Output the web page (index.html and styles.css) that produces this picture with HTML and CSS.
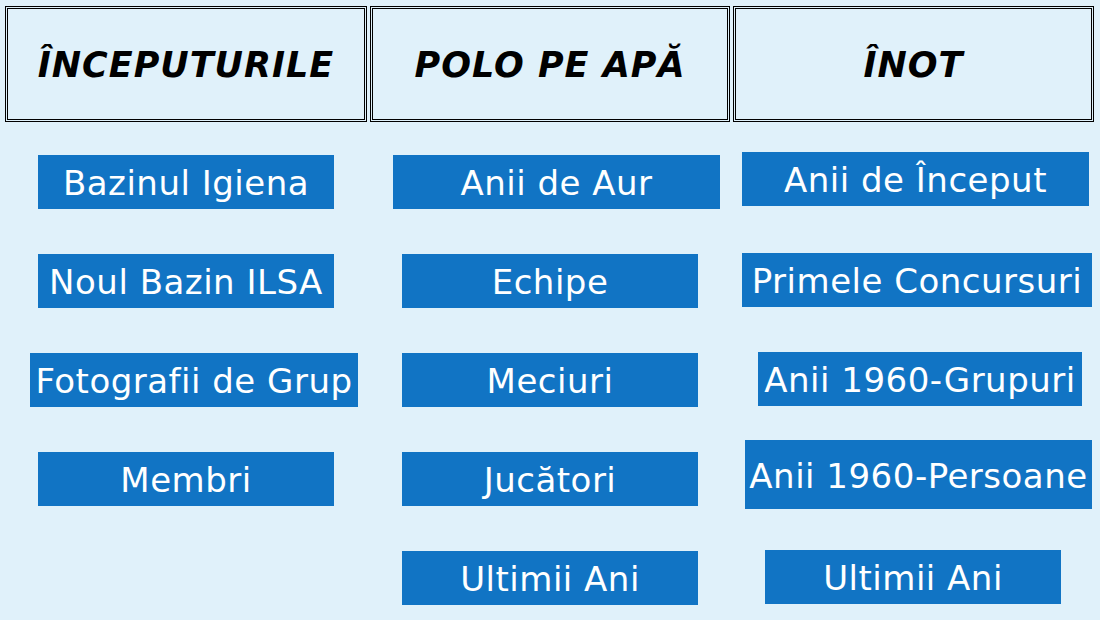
FILE: index.html
```html
<!DOCTYPE html>
<html lang="ro">
<head>
    <meta charset="UTF-8">
    <meta name="viewport" content="width=device-width, initial-scale=1.0">
    <title>Arhiva Clubului</title>
    <link rel="stylesheet" href="styles.css">
</head>
<body>
    <div class="archive">
        <div class="section">
            <h2 class="section-title">ÎNCEPUTURILE</h2>
            <div class="btn-list">
                <a class="btn" href="#">Bazinul Igiena</a>
                <a class="btn" href="#">Noul Bazin ILSA</a>
                <a class="btn btn-wide" href="#">Fotografii de Grup</a>
                <a class="btn" href="#">Membri</a>
            </div>
        </div>
        <div class="section">
            <h2 class="section-title">POLO PE APĂ</h2>
            <div class="btn-list">
                <a class="btn btn-gold" href="#">Anii de Aur</a>
                <a class="btn" href="#">Echipe</a>
                <a class="btn" href="#">Meciuri</a>
                <a class="btn" href="#">Jucători</a>
                <a class="btn" href="#">Ultimii Ani</a>
            </div>
        </div>
        <div class="section swim">
            <h2 class="section-title">ÎNOT</h2>
            <div class="btn-list">
                <a class="btn btn-start" href="#">Anii de Început</a>
                <a class="btn btn-contests" href="#">Primele Concursuri</a>
                <a class="btn btn-groups" href="#">Anii 1960-Grupuri</a>
                <a class="btn btn-people" href="#">Anii 1960-Persoane</a>
                <a class="btn btn-last" href="#">Ultimii Ani</a>
            </div>
        </div>
    </div>
</body>
</html>
```

FILE: styles.css
```css
body {
    margin: 0;
    background-color: #e0f1fa;
    font-family: "DejaVu Sans", Verdana, sans-serif;
    height: 620px;
    overflow: hidden;
}
.archive {
    display: grid;
    grid-template-columns: 362px 360px 361px;
    column-gap: 3px;
    padding: 6px 5px 0;
}
.section-title {
    margin: 0;
    height: 116px;
    box-sizing: border-box;
    padding-top: 2px;
    border: 3px double #000;
    display: flex;
    align-items: center;
    justify-content: center;
    font-size: 35px;
    font-style: italic;
    font-weight: bold;
    letter-spacing: 1px;
    color: #000;
}
.btn-list {
    display: flex;
    flex-direction: column;
    align-items: center;
    gap: 45px;
    padding-top: 33px;
}
.btn {
    width: 296px;
    height: 54px;
    box-sizing: border-box;
    padding-top: 2px;
    display: flex;
    align-items: center;
    justify-content: center;
    background: #1174c4;
    color: #fff;
    text-decoration: none;
    font-size: 34px;
    letter-spacing: 0.5px;
    white-space: nowrap;
}
.btn-wide { width: 328px; margin-left: 16px; }
.btn-gold { width: 327px; margin-left: 13px; }

.swim .btn-list { padding-top: 30px; }
.btn-start { width: 347px; margin-left: 4px; }
.btn-contests { width: 350px; margin-top: 2px; margin-left: 7px; }
.btn-groups { width: 324px; margin-left: 13px; }
.btn-people { width: 347px; height: 69px; margin: -11px 0 -4px 10px; }
.btn-last { margin-left: -1px; }
```
